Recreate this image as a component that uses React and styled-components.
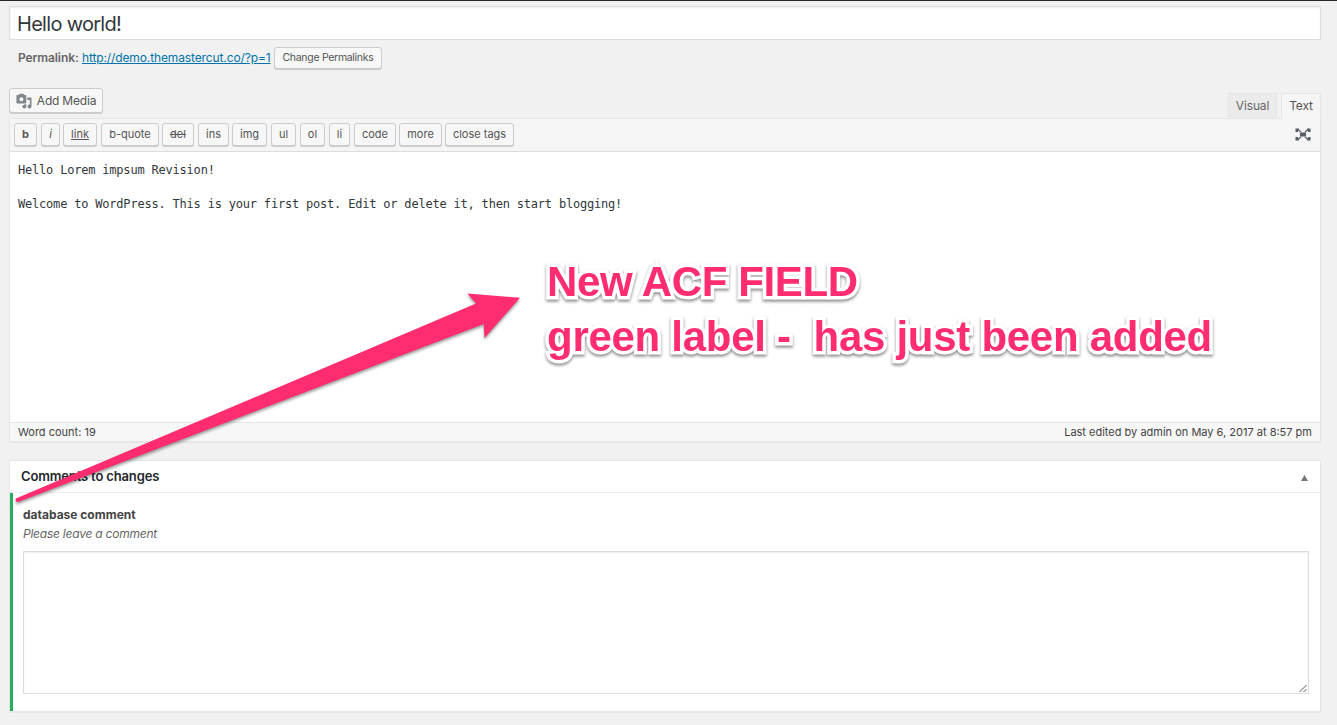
import React from "react";
import styled, { createGlobalStyle, css } from "styled-components";

const Global = createGlobalStyle`
  * { box-sizing: border-box; }
  html, body { margin: 0; height: 100%; overflow: hidden; }
  body {
    background: #f1f1f1;
    color: #444;
    font: 13px/1.4 Inter, "Liberation Sans", sans-serif;
  }
`;

const Page = styled.div`
  position: relative;
  width: 1337px;
  height: 725px;
  padding: 5px 16px 0 9px;
  border-top: 1px solid #23282d;
  display: flex;
  flex-direction: column;
`;

const TitleInput = styled.div`
  height: 34px;
  flex: none;
  display: flex;
  align-items: center;
  padding: 2px 7px 0;
  background: #fff;
  border: 1px solid #ddd;
  box-shadow: inset 0 1px 2px rgba(0, 0, 0, 0.07);
  color: #32373c;
  font-size: 20px;
  letter-spacing: -0.7px;
`;

const PermalinkRow = styled.div`
  display: flex;
  align-items: center;
  height: 23px;
  margin-top: 7px;
  padding-left: 9px;
  font-size: 12px;
  color: #666;
  white-space: pre;
`;

const PermalinkLabel = styled.strong`
  width: 64px;
  font-weight: 600;
  letter-spacing: -0.1px;
`;

const Link = styled.a`
  width: 192px;
  color: #0073aa;
  text-decoration: underline;
  letter-spacing: -0.12px;
`;

const buttonFace = css`
  display: inline-flex;
  align-items: center;
  justify-content: center;
  flex: none;
  border: 1px solid #ccc;
  border-radius: 3px;
  background: #f7f7f7;
  box-shadow: 0 1px 0 #ccc;
  color: #555;
  white-space: nowrap;
`;

const SmallButton = styled.span`
  ${buttonFace}
  width: 108px;
  height: 22px;
  font-size: 10.5px;
  letter-spacing: -0.3px;
  align-self: flex-start;
`;

const EditorTop = styled.div`
  display: flex;
  justify-content: space-between;
  height: 30px;
  margin-top: 18px;
  flex: none;
`;

const MediaButton = styled.span`
  ${buttonFace}
  width: 94px;
  height: 25px;
  padding-top: 1px;
  gap: 5px;
  font-size: 12px;
  letter-spacing: -0.2px;
`;

const Tabs = styled.div`
  display: flex;
  gap: 4px;
  align-self: flex-end;
  height: 25px;
  position: relative;
`;

const Tab = styled.span`
  width: ${(p) => p.$width}px;
  height: ${(p) => (p.$active ? 26 : 25)}px;
  display: flex;
  align-items: center;
  justify-content: center;
  border: 1px solid #e5e5e5;
  border-bottom: 0;
  background: ${(p) => (p.$active ? "#f5f5f5" : "#ebebeb")};
  color: ${(p) => (p.$active ? "#555" : "#666")};
  font-size: 12px;
  letter-spacing: -0.15px;
`;

const Editor = styled.section`
  height: 324px;
  flex: none;
  display: flex;
  flex-direction: column;
  border: 1px solid #e5e5e5;
  box-shadow: 0 1px 1px rgba(0, 0, 0, 0.04);
`;

const Toolbar = styled.div`
  height: 33px;
  flex: none;
  display: flex;
  align-items: flex-start;
  padding: 4px 9px 0 4px;
  background: #f5f5f5;
  border-bottom: 1px solid #ddd;
`;

const TagButton = styled.span`
  ${buttonFace}
  width: ${(p) => p.$width}px;
  height: 23px;
  margin-right: ${(p) => p.$gap}px;
  padding-top: 1px;
  font-size: 11px;
  font-weight: ${(p) => (p.$look === "bold" ? 700 : 400)};
  font-style: ${(p) => (p.$look === "italic" ? "italic" : "normal")};
  text-decoration: ${(p) =>
    p.$look === "underline" ? "underline" : p.$look === "strike" ? "line-through" : "none"};
`;

const Expand = styled.svg`
  margin: 4px 0 0 auto;
`;

const Content = styled.div`
  flex: 1;
  padding: 10px 8px 0;
  background: #fff;
  color: #32373c;
  font: 12px/17px "DejaVu Sans Mono", monospace;
  letter-spacing: -0.2px;
  white-space: pre-wrap;
`;

const StatusBar = styled.div`
  height: 19px;
  flex: none;
  display: flex;
  align-items: center;
  justify-content: space-between;
  padding: 1px 8px 0;
  background: #f7f7f7;
  border-top: 1px solid #e5e5e5;
  font-size: 11px;
`;

const Postbox = styled.section`
  margin-top: 18px;
  height: 252px;
  flex: none;
  display: flex;
  flex-direction: column;
  background: #fff;
  border: 1px solid #e5e5e5;
  box-shadow: 0 1px 1px rgba(0, 0, 0, 0.04);
`;

const PostboxHeader = styled.header`
  height: 32px;
  flex: none;
  display: flex;
  align-items: center;
  justify-content: space-between;
  padding: 0 12px 0 11px;
  border-bottom: 1px solid #eee;
`;

const PostboxTitle = styled.h2`
  margin: 0;
  color: #23282d;
  font-size: 13px;
  font-weight: 600;
  letter-spacing: -0.15px;
`;

const Toggle = styled.svg`
  margin-top: 2px;
`;

const Field = styled.div`
  flex: 1;
  display: flex;
  flex-direction: column;
  padding: 13px 11px 17px 10px;
  border-left: 3px solid #27ae60;
`;

const FieldLabel = styled.label`
  font-size: 12px;
  font-weight: 700;
  line-height: 18px;
`;

const FieldHint = styled.em`
  margin-top: 1px;
  font-size: 12px;
  line-height: 18px;
  letter-spacing: -0.23px;
  color: #666;
`;

const FieldInput = styled.div`
  flex: 1;
  margin-top: 8px;
  display: flex;
  align-items: flex-end;
  justify-content: flex-end;
  border: 1px solid #ddd;
  box-shadow: inset 0 1px 2px rgba(0, 0, 0, 0.07);
`;

const Arrow = styled.svg`
  position: absolute;
  left: 0;
  top: -1px;
  filter: drop-shadow(0 2px 1.5px rgba(0, 0, 0, 0.4));
`;

const Note = styled.div`
  position: absolute;
  left: 547px;
  top: 253px;
  color: #ff2d6f;
  font: bold 42px/55px "Liberation Sans", Arial, sans-serif;
  white-space: pre;
  -webkit-text-stroke: 7px #fff;
  paint-order: stroke fill;
  stroke-linejoin: round;
  filter: drop-shadow(0 2px 1.5px rgba(0, 0, 0, 0.45));
`;

const NoteLine = styled.div`
  letter-spacing: ${(p) => p.$spacing}px;
`;

const tags = [
  ["b", 23, 4, "bold"],
  ["i", 19, 3, "italic"],
  ["link", 34, 4, "underline"],
  ["b-quote", 58, 3],
  ["del", 32, 4, "strike"],
  ["ins", 31, 3],
  ["img", 35, 4],
  ["ul", 25, 4],
  ["ol", 25, 4],
  ["li", 21, 4],
  ["code", 42, 3],
  ["more", 43, 3],
  ["close tags", 69, 0],
];

const MediaIcon = () => (
  <svg width="16" height="16" viewBox="0 0 16 16" fill="#82878c">
    <path
      fillRule="evenodd"
      d="M1.200 2H2.800L3.600.8h3.800L8.200 2h1.300q.8 0 .8.800v6.900q0 .8-.8.800H1.200q-.8 0-.8-.8V2.800Q.4 2 1.200 2zM5.400 4.200a2 2 0 1 0 0 4 2 2 0 0 0 0-4z"
    />
    <path d="M11.300 4.600h4.200v8.900a2 1.900 0 1 1-1.700-1.900V6.900h-2.500zM8.300 11.200h2v2.400a2 1.900 0 1 1-2-1.900z" />
  </svg>
);

export default function App() {
  return (
    <>
      <Global />
      <Page>
        <TitleInput>Hello world!</TitleInput>
        <PermalinkRow>
          <PermalinkLabel>Permalink:</PermalinkLabel>
          <Link>http://demo.themastercut.co/?p=1</Link>
          <SmallButton>Change Permalinks</SmallButton>
        </PermalinkRow>
        <EditorTop>
          <MediaButton>
            <MediaIcon />
            Add Media
          </MediaButton>
          <Tabs>
            <Tab $width={49}>Visual</Tab>
            <Tab $width={40} $active>Text</Tab>
          </Tabs>
        </EditorTop>
        <Editor>
          <Toolbar>
            {tags.map(([name, width, gap, look]) => (
              <TagButton key={name} $width={width} $gap={gap} $look={look}>
                {name}
              </TagButton>
            ))}
            <Expand width="16" height="15" viewBox="0 0 16 15" fill="#555d66">
              <path d="M5 5.500h6v4H5z" />
              <path d="M.5 1.500h3.500v1l2.500 2.200-.8.800L3 3.500v1.500H.5zM15.500 1.500H12v1L9.500 4.700l.8.800L13 3.500v1.500h2.500zM.5 13.500h3.500v-1l2.500-2.200-.8-.8L3 11.500V10H.5zM15.500 13.500H12v-1l-2.500-2.200.8-.8L13 11.500V10h2.500z" />
            </Expand>
          </Toolbar>
          <Content>
            {"Hello Lorem impsum Revision!\n\nWelcome to WordPress. This is your first post. Edit or delete it, then start blogging!"}
          </Content>
          <StatusBar>
            <span>Word count: 19</span>
            <span>Last edited by admin on May 6, 2017 at 8:57 pm</span>
          </StatusBar>
        </Editor>
        <Postbox>
          <PostboxHeader>
            <PostboxTitle>Comments to changes</PostboxTitle>
            <Toggle width="7" height="6" viewBox="0 0 7 6" fill="#72777c">
              <path d="M3.500 0L7 6H0z" />
            </Toggle>
          </PostboxHeader>
          <Field>
            <FieldLabel>database comment</FieldLabel>
            <FieldHint>Please leave a comment</FieldHint>
            <FieldInput>
              <svg width="9" height="9" viewBox="0 0 9 9" stroke="#555" fill="none">
                <path d="M0.500 8L7.500 1M4.500 8L7.500 5" />
              </svg>
            </FieldInput>
          </Field>
        </Postbox>
        <Arrow width="540" height="520" viewBox="0 0 540 520">
          <path
            fill="#ff2d6f"
            d="M16.500 498.300L476 303.500L467.300 293.500L520 297.700L484.500 338L483.700 324L18 502Q15.500 502 15.500 500Q15.500 498.800 16.500 498.300Z"
          />
        </Arrow>
        <Note>
          <NoteLine $spacing={-0.4}>New ACF FIELD</NoteLine>
          <NoteLine $spacing={-0.28}>{"green label -  has just been added"}</NoteLine>
        </Note>
      </Page>
    </>
  );
}
